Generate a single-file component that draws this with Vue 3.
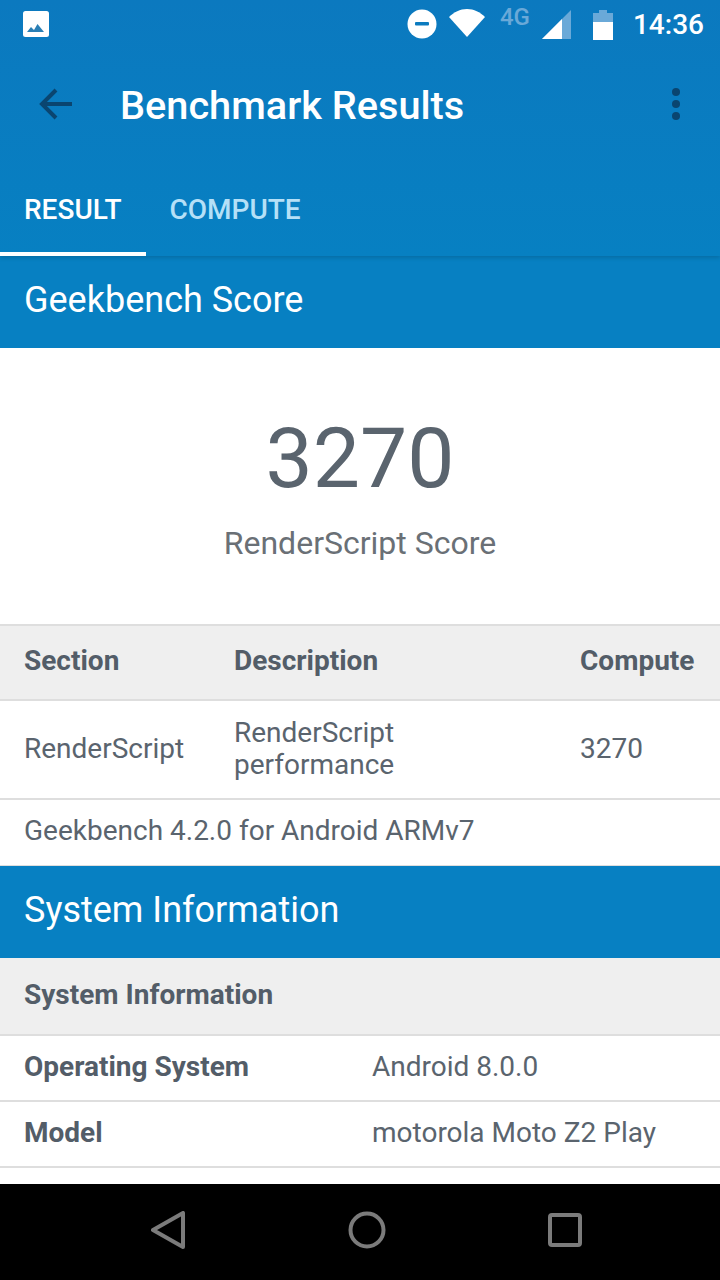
<template>
  <div class="phone">
    <header class="appbar">
      <div class="status">
        <svg class="pic" width="28" height="28" viewBox="0 0 28 28">
          <rect x="1" y="1" width="26" height="26" rx="2.5" fill="#fff" />
          <path d="M5 22l4-5 3 3 3.500-6 6.500 8z" fill="#2a7fb5" />
        </svg>
        <div class="status-right">
          <svg class="dnd" width="30" height="30" viewBox="0 0 30 30">
            <circle cx="15" cy="15" r="14.500" fill="#fff" />
            <rect x="8" y="13" width="14" height="3.500" rx="1" fill="#0b7bbf" />
          </svg>
          <svg class="wifi" width="36" height="28" viewBox="0 0 36 28">
            <path d="M0 8C5 3 11 0 18 0s13 3 18 8L18 28z" fill="#fff" />
          </svg>
          <span class="net">4G</span>
          <svg class="signal" width="30" height="30" viewBox="0 0 30 30">
            <path d="M0 29L29 0v29z" fill="#6aa9d8" />
            <path d="M0 29L20 9v20z" fill="#fff" />
          </svg>
          <svg class="battery" width="20" height="30" viewBox="0 0 20 30">
            <path d="M6 0h8v3h6v9H0V3h6z" fill="#6aa9d8" />
            <rect y="12" width="20" height="18" fill="#fff" />
          </svg>
          <span class="clock">14:36</span>
        </div>
      </div>
      <div class="toolbar">
        <svg class="back" width="36" height="34" viewBox="0 0 36 34">
          <path d="M34 17H4M18 3L4 17l14 14" fill="none" stroke="#0a4570" stroke-width="4" />
        </svg>
        <h1>Benchmark Results</h1>
        <div class="menu"><i></i><i></i><i></i></div>
      </div>
      <nav class="tabs">
        <div class="tab active">RESULT</div>
        <div class="tab">COMPUTE</div>
      </nav>
    </header>

    <main class="content">
      <div class="band">Geekbench Score</div>
      <section class="score">
        <div class="number">3270</div>
        <div class="label">RenderScript Score</div>
      </section>

      <div class="row head results">
        <span>Section</span><span>Description</span><span>Compute</span>
      </div>
      <div class="row results tall">
        <span>RenderScript</span>
        <span>RenderScript<br />performance</span>
        <span>3270</span>
      </div>
      <div class="row foot">Geekbench 4.2.0 for Android ARMv7</div>

      <div class="band">System Information</div>
      <div class="row head sys-head">System Information</div>
      <div v-for="item in info" :key="item.name" class="row info">
        <b>{{ item.name }}</b>
        <span>{{ item.value }}</span>
      </div>
    </main>

    <footer class="navbar">
      <svg width="34" height="38" viewBox="0 0 34 38">
        <path d="M32 2v34L2 19z" fill="none" stroke="#7b7b7b" stroke-width="4" stroke-linejoin="round" />
      </svg>
      <svg width="38" height="38" viewBox="0 0 38 38">
        <circle cx="19" cy="19" r="16.500" fill="none" stroke="#7b7b7b" stroke-width="4" />
      </svg>
      <svg width="34" height="34" viewBox="0 0 34 34">
        <rect x="2" y="2" width="30" height="30" rx="2" fill="none" stroke="#7b7b7b" stroke-width="4" />
      </svg>
    </footer>
  </div>
</template>

<script setup>
const info = [
  { name: 'Operating System', value: 'Android 8.0.0' },
  { name: 'Model', value: 'motorola Moto Z2 Play' }
]
</script>

<style>
html,
body {
  margin: 0;
  background: #fff;
}
</style>

<style scoped>
.phone {
  width: 720px;
  height: 1280px;
  display: flex;
  flex-direction: column;
  overflow: hidden;
  font-family: Roboto, "Liberation Sans", sans-serif;
  color: #5a646e;
  background: #fff;
}

.appbar {
  height: 256px;
  flex: none;
  position: relative;
  z-index: 1;
  background: linear-gradient(#0b79bf, #0780c2);
  box-shadow: 0 2px 4px rgba(0, 0, 0, 0.15);
}

.status {
  height: 48px;
  display: flex;
  align-items: center;
  justify-content: space-between;
  padding: 0 16px 0 22px;
}

.status-right {
  display: flex;
  align-items: center;
  color: #fff;
}

.dnd {
  margin-right: 12px;
}

.wifi {
  margin: -2px 15px 0 0;
}

.net {
  font-size: 24px;
  font-weight: 500;
  color: #6aa9d8;
  margin: -14px 12px 0 0;
}

.signal {
  margin: 2px 21px 0 0;
}

.battery {
  margin: 2px 20px 0 0;
}

.clock {
  font-size: 28px;
  font-weight: 500;
}

.toolbar {
  height: 112px;
  display: flex;
  align-items: center;
  padding: 2px 0 0 38px;
  box-sizing: border-box;
}

.toolbar h1 {
  margin: 0 0 0 46px;
  font-size: 39.7px;
  font-weight: 500;
  color: #fff;
  flex: 1;
}

.back {
  margin-top: -2px;
}

.menu {
  display: flex;
  flex-direction: column;
  gap: 4px;
  margin: -2px 40px 0 0;
}

.menu i {
  width: 8px;
  height: 8px;
  border-radius: 50%;
  background: #0a4570;
}

.tabs {
  height: 96px;
  display: flex;
}

.tab {
  padding: 0 24px;
  line-height: 100px;
  height: 96px;
  box-sizing: border-box;
  font-size: 28px;
  font-weight: 500;
  color: #b5e0f7;
}

.tab.active {
  color: #fff;
  border-bottom: 4px solid #fff;
}

.content {
  flex: 1;
  min-height: 0;
  overflow: hidden;
}

.band {
  background: #0780c2;
  color: #fff;
  padding-left: 24px;
  font-size: 36px;
  height: 92px;
  line-height: 88px;
}

.score {
  height: 276px;
  box-sizing: border-box;
  text-align: center;
  padding-top: 60px;
  background: #fff;
}

.number {
  font-size: 84px;
  line-height: 102px;
}

.label {
  margin-top: 13px;
  font-size: 32px;
  line-height: 40px;
  color: #6a7076;
}

.row {
  display: flex;
  align-items: center;
  box-sizing: border-box;
  padding-left: 24px;
  font-size: 28px;
  line-height: 32px;
  border-top: 2px solid #dedede;
}

.head {
  background: #efefef;
  color: #535d68;
  font-weight: 700;
  height: 75px;
  padding-bottom: 4px;
}

.results {
  display: grid;
  grid-template-columns: 210px 346px 1fr;
  align-items: center;
}

.tall {
  height: 99px;
  padding-bottom: 1px;
}

.foot {
  height: 68px;
  padding-bottom: 4px;
  border-bottom: 1px solid #dedede;
}

.sys-head {
  height: 76px;
  border-top: none;
  padding-bottom: 2px;
}

.info {
  height: 66px;
  padding-bottom: 2px;
}

.info b {
  width: 348px;
  font-weight: 700;
  color: #535d68;
}

.info:last-child {
  border-bottom: 2px solid #dedede;
  height: 68px;
}

.navbar {
  height: 96px;
  flex: none;
  background: #000;
  display: flex;
  align-items: center;
  justify-content: space-between;
  padding: 0 138px 4px 151px;
  box-sizing: border-box;
}
</style>
